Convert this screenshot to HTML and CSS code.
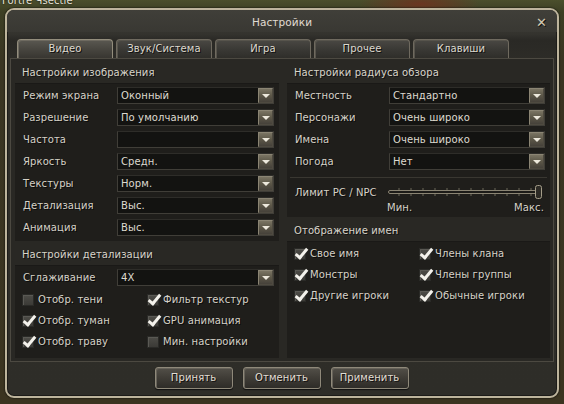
FILE: index.html
```html
<!DOCTYPE html>
<html lang="ru">
<head>
<meta charset="utf-8">
<title>Настройки</title>
<link rel="stylesheet" href="styles.css">
</head>
<body>
<div class="scene-text">Fortre Чsectie</div>
<div class="window">
  <div class="titlebar">
    <span></span>
    <span class="title">Настройки</span>
    <span class="close">✕</span>
  </div>
  <div class="tabs">
    <div class="tab active">Видео</div>
    <div class="tab">Звук/Система</div>
    <div class="tab">Игра</div>
    <div class="tab">Прочее</div>
    <div class="tab">Клавиши</div>
  </div>
  <div class="panel">
    <div class="col">
      <div class="sect-h">Настройки изображения</div>
      <div class="box">
        <div class="row"><span class="lbl">Режим экрана</span><div class="sel"><span>Оконный</span><i class="arr"></i></div></div>
        <div class="row"><span class="lbl">Разрешение</span><div class="sel"><span>По умолчанию</span><i class="arr"></i></div></div>
        <div class="row"><span class="lbl">Частота</span><div class="sel"><span></span><i class="arr"></i></div></div>
        <div class="row"><span class="lbl">Яркость</span><div class="sel"><span>Средн.</span><i class="arr"></i></div></div>
        <div class="row"><span class="lbl">Текстуры</span><div class="sel"><span>Норм.</span><i class="arr"></i></div></div>
        <div class="row"><span class="lbl">Детализация</span><div class="sel"><span>Выс.</span><i class="arr"></i></div></div>
        <div class="row"><span class="lbl">Анимация</span><div class="sel"><span>Выс.</span><i class="arr"></i></div></div>
      </div>
      <div class="sect-h">Настройки детализации</div>
      <div class="box grow">
        <div class="row"><span class="lbl">Сглаживание</span><div class="sel"><span>4X</span><i class="arr"></i></div></div>
        <div class="checks left-checks">
          <div class="chk"><i class="cb"></i>Отобр. тени</div>
          <div class="chk"><i class="cb on"></i>Фильтр текстур</div>
          <div class="chk"><i class="cb on"></i>Отобр. туман</div>
          <div class="chk"><i class="cb on"></i>GPU анимация</div>
          <div class="chk"><i class="cb on"></i>Отобр. траву</div>
          <div class="chk"><i class="cb"></i>Мин. настройки</div>
        </div>
      </div>
    </div>
    <div class="col">
      <div class="sect-h">Настройки радиуса обзора</div>
      <div class="box">
        <div class="row"><span class="lbl">Местность</span><div class="sel"><span>Стандартно</span><i class="arr"></i></div></div>
        <div class="row"><span class="lbl">Персонажи</span><div class="sel"><span>Очень широко</span><i class="arr"></i></div></div>
        <div class="row"><span class="lbl">Имена</span><div class="sel"><span>Очень широко</span><i class="arr"></i></div></div>
        <div class="row"><span class="lbl">Погода</span><div class="sel"><span>Нет</span><i class="arr"></i></div></div>
        <div class="divider"></div>
        <div class="slider-row">
          <span class="lbl">Лимит PC / NPC</span>
          <div class="slider">
            <svg width="158" height="16" viewBox="0 0 158 16">
              <g stroke="#6d685b" stroke-width="1">
                <path d="M12 4v2M24 4v2M36 4v2M48 4v2M60 4v2M72 4v2M84 4v2M96 4v2M108 4v2M120 4v2M132 4v2M144 4v2"/>
                <path d="M12 10v2M24 10v2M36 10v2M48 10v2M60 10v2M72 10v2M84 10v2M96 10v2M108 10v2M120 10v2M132 10v2M144 10v2"/>
              </g>
              <rect x="1.5" y="6.5" width="152" height="3" rx="1.5" fill="#1b1a17" stroke="#8a8473"/>
              <rect x="148.5" y="1.5" width="6" height="13" rx="2" fill="#2c2a25" stroke="#a49d89"/>
            </svg>
          </div>
        </div>
        <div class="minmax"><span>Мин.</span><span>Макс.</span></div>
      </div>
      <div class="sect-h">Отображение имен</div>
      <div class="box grow">
        <div class="checks right-checks">
          <div class="chk"><i class="cb on"></i>Свое имя</div>
          <div class="chk"><i class="cb on"></i>Члены клана</div>
          <div class="chk"><i class="cb on"></i>Монстры</div>
          <div class="chk"><i class="cb on"></i>Члены группы</div>
          <div class="chk"><i class="cb on"></i>Другие игроки</div>
          <div class="chk"><i class="cb on"></i>Обычные игроки</div>
        </div>
      </div>
    </div>
  </div>
  <div class="buttons">
    <div class="btn">Принять</div>
    <div class="btn">Отменить</div>
    <div class="btn">Применить</div>
  </div>
</div>
</body>
</html>
```

FILE: styles.css
```css
html, body {
  margin: 0;
  padding: 0;
}
body {
  width: 564px;
  height: 404px;
  overflow: hidden;
  position: relative;
  font-family: "DejaVu Sans", "Liberation Sans", sans-serif;
  font-size: 10px;
  letter-spacing: 0.1px;
  color: #d6d2c8;
  background:
    radial-gradient(ellipse 60px 14px at 420px 4px, #6a3520 0%, rgba(106,53,32,0) 100%),
    linear-gradient(180deg, #4b4f2c 0px, #3d3f24 12px, #3a3522 60px, #3b3420 100%);
}
.scene-text {
  position: absolute;
  left: 2px;
  top: -5px;
  color: #e8e4d8;
  font-size: 10px;
  text-shadow: 0 0 2px #000;
}
.window {
  margin: 8px 0 0 5px;
  width: 554px;
  height: 390px;
  box-sizing: border-box;
  border: 2px solid #bdb49c;
  border-radius: 9px;
  background: linear-gradient(180deg, #3d3c37 0px, #34332e 24px, #2a2925 30px, #2f2e29 60px, #2e2d28 100%);
  box-shadow: inset 0 0 0 1px #1c1b18, 0 0 2px #000;
  display: flex;
  flex-direction: column;
}
.titlebar {
  height: 22px;
  display: grid;
  grid-template-columns: 1fr auto 1fr;
  align-items: center;
  border-radius: 7px 7px 0 0;
  background: linear-gradient(180deg, #403f39 0%, #393833 100%);
}
.title {
  color: #e0dcd2;
  font-size: 10.5px;
  padding-top: 1px;
}
.close {
  justify-self: end;
  margin-right: 10px;
  color: #d2c9b1;
  font-size: 13px;
  font-weight: bold;
  padding-top: 2px;
  text-shadow: 1px 1px 0 #111;
}
.tabs {
  display: flex;
  gap: 3px;
  margin-top: 7px;
  padding-left: 10px;
  height: 19px;
}
.tab {
  width: 96px;
  box-sizing: border-box;
  border: 1px solid #6f6a5f;
  border-bottom: none;
  border-radius: 4px 4px 0 0;
  background: linear-gradient(180deg, #4a4843 0%, #393834 55%, #2f2e2a 100%);
  box-shadow: inset 1px 1px 0 #57544c;
  text-align: center;
  line-height: 18px;
  color: #dcd8ce;
  text-shadow: 1px 1px 0 #111;
}
.tab.active {
  border-color: #938d7c;
  background: linear-gradient(180deg, #5a5851 0%, #46443e 55%, #383631 100%);
  box-shadow: inset 1px 1px 0 #6e6a60;
}
.panel {
  margin: 0 3px;
  height: 304px;
  box-sizing: border-box;
  border: 1px solid #4c4941;
  background: #292824;
  padding: 0 3px 3px 4px;
  display: flex;
  gap: 8px;
}
.col {
  display: flex;
  flex-direction: column;
}
.col:first-child { width: 264px; }
.col:last-child { width: 263px; }
.sect-h {
  height: 24px;
  box-sizing: border-box;
  padding: 7px 0 0 7px;
  line-height: 13px;
  color: #d8d4ca;
  text-shadow: 1px 1px 0 #111;
}
.box {
  background: #1f1e1b;
  border-top: 1px solid #1a1917;
  padding: 0 5px 3px 8px;
  box-sizing: border-box;
}
.box.grow { flex: 1; }
.row {
  height: 22px;
  display: flex;
  align-items: center;
}
.lbl {
  width: 94px;
  flex: none;
  color: #d6d2c8;
  text-shadow: 1px 1px 0 #0c0c0b;
}
.sel {
  flex: 1;
  height: 17px;
  box-sizing: border-box;
  border: 1px solid #403e38;
  border-top-color: #2e2d29;
  background: #131311;
  display: flex;
  align-items: center;
  justify-content: space-between;
  padding-left: 3px;
  color: #dedad0;
}
.arr {
  width: 15px;
  height: 15px;
  box-sizing: border-box;
  border: 1px solid #8b8574;
  border-right-color: #4e4a40;
  border-bottom-color: #4e4a40;
  background: linear-gradient(180deg, #7a7463 0%, #5c5748 50%, #45413a 100%);
  position: relative;
}
.arr::after {
  content: "";
  position: absolute;
  left: 3px;
  top: 5px;
  border-left: 4px solid transparent;
  border-right: 4px solid transparent;
  border-top: 4px solid #ece8dc;
}
.checks {
  display: grid;
  grid-template-columns: 125px 1fr;
  padding-top: 1px;
}
.chk {
  height: 21px;
  display: flex;
  align-items: center;
  gap: 4px;
  color: #d6d2c8;
  text-shadow: 1px 1px 0 #0c0c0b;
}
.left-checks { margin-left: -1px; }
.right-checks { margin-left: -1px; padding-top: 1px; }
.cb {
  width: 12px;
  height: 12px;
  flex: none;
  box-sizing: border-box;
  border: 1px solid #2a2a27;
  background: linear-gradient(180deg, #4d4c47 0%, #3b3a36 100%);
  box-shadow: inset 1px 1px 0 #5a5954;
  position: relative;
}
.cb.on::after {
  content: "";
  position: absolute;
  left: 3px;
  top: -3px;
  width: 4px;
  height: 10px;
  border-right: 3px solid #f4f2ec;
  border-bottom: 3px solid #f4f2ec;
  transform: rotate(40deg);
  transform-origin: center;
}
.divider {
  height: 1px;
  background: #393731;
  margin: 5px -2px 0 -5px;
}
.slider-row {
  height: 20px;
  margin-top: 4px;
  display: flex;
  align-items: center;
}
.lbl + .slider { margin-left: -2px; }
.slider {
  height: 16px;
  display: flex;
}
.minmax {
  display: flex;
  justify-content: space-between;
  margin-left: 92px;
  margin-right: 1px;
  height: 12px;
  line-height: 12px;
  color: #d6d2c8;
  text-shadow: 1px 1px 0 #0c0c0b;
}
.buttons {
  display: flex;
  justify-content: center;
  gap: 10px;
  margin-top: 5px;
  padding-right: 1px;
}
.btn {
  width: 78px;
  height: 22px;
  box-sizing: border-box;
  border: 1px solid #8f897a;
  border-radius: 3px;
  background: linear-gradient(180deg, #524f48 0%, #3f3c36 50%, #2e2c28 100%);
  box-shadow: inset 1px 1px 0 #67635a, 0 1px 1px #111;
  text-align: center;
  line-height: 20px;
  color: #e2ded4;
  text-shadow: 1px 1px 0 #111;
}
```
